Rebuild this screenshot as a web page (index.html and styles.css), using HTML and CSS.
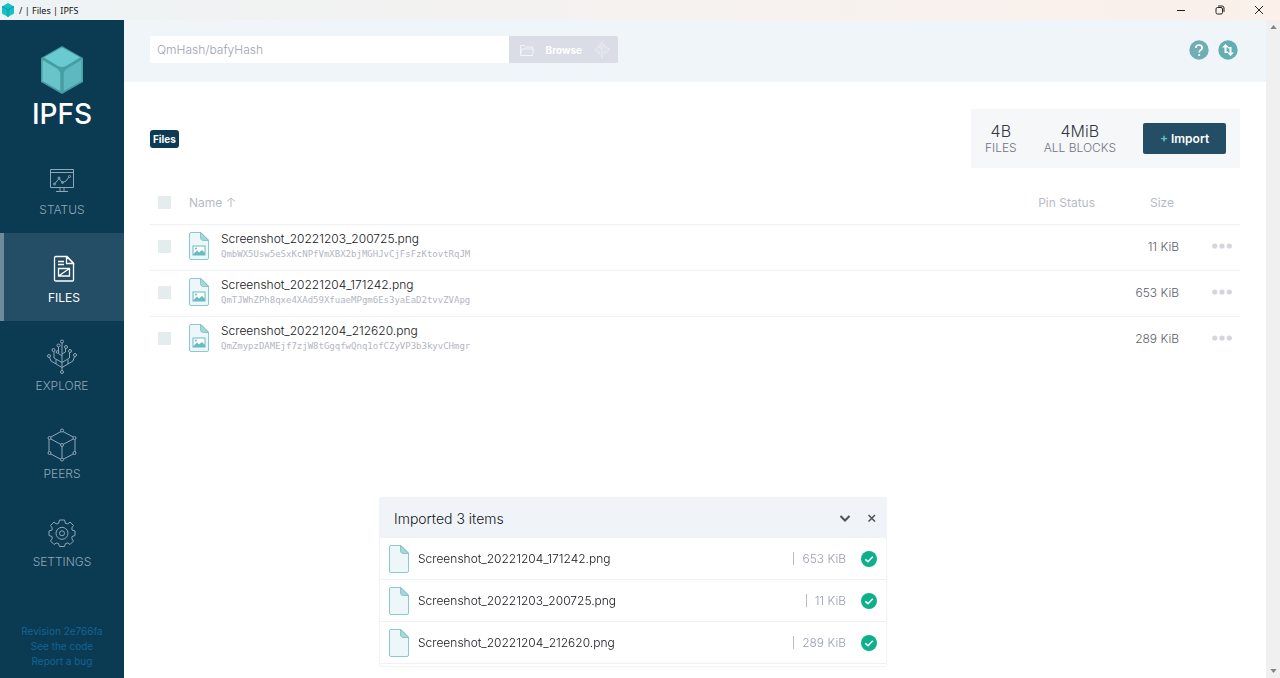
FILE: index.html
```html
<!DOCTYPE html>
<html lang="en">
<head>
<meta charset="utf-8">
<title>/ | Files | IPFS</title>
<link rel="stylesheet" href="styles.css">
</head>
<body>
<svg class="defs" aria-hidden="true">
  <symbol id="cube" viewBox="0 0 42 48">
    <path d="M21 0 42 12V36L21 48 0 36V12Z" fill="#469ea2"/>
    <path d="M3 11.500 20 2Q21 1.500 22 2L39 11.500 25 20Q21 22 17 20Z" fill="#6acad1"/>
    <path d="M1.500 14 16 22.500Q19.500 25 19.500 28V45L1.500 35Z" fill="#69c4ca"/>
    <path d="M40.500 14 26 22.500Q22.500 25 22.500 28V45L40.500 35Z" fill="#5bb9bf"/>
    <path d="M15 21Q21 25 27 21L22.500 26V46H19.500V26Z" fill="#469ea2"/>
  </symbol>
  <symbol id="tree" viewBox="0 0 30 36">
    <g fill="none" stroke="currentColor">
      <path d="M15 4V31.500M15 28.500 4 22 2.500 18.500M15 28.500 26 22 27.500 17.500M15 23.500 7 19V12.500M15 23.500 22.500 19V13.500M15 17 11.500 14.500V8M15 15 18.500 13V9.500M9 25V20.500M21 25V20.500"/>
      <circle cx="15" cy="2.500" r="1.500"/><circle cx="15" cy="33" r="1.500"/><circle cx="2" cy="17" r="1.500"/><circle cx="28" cy="16" r="1.500"/><circle cx="6.500" cy="11" r="1.500"/><circle cx="23" cy="12" r="1.500"/><circle cx="11.500" cy="6.500" r="1.500"/><circle cx="19" cy="8" r="1.500"/><circle cx="10.500" cy="13" r="1.300"/>
    </g>
  </symbol>
  <symbol id="doc" viewBox="0 0 20 28">
    <path d="M2 .5H12L19.500 8V26Q19.500 27.500 18 27.500H2Q.5 27.500 .5 26V2Q.5 .5 2 .5Z" fill="#edf7fa" stroke="#8bc9cf"/>
    <path d="M11.500 .5 19.500 8.500H14Q11.500 8 11.500 6Z" fill="#a5d8db" stroke="#79bdc3" stroke-width=".8"/>
  </symbol>
  <symbol id="picdoc" viewBox="0 0 20 28">
    <use href="#doc" width="20" height="28"/>
    <rect x="4" y="14" width="12" height="9" fill="#fff" stroke="#69bac1"/>
    <path d="M4 22.500 8 18.500 10 20.500 13 18 16 21V23H4Z" fill="#69bac1"/><circle cx="7" cy="16.500" r="1" fill="#69bac1"/>
  </symbol>
  <symbol id="dots" viewBox="0 0 20 6"><g fill="#d4d6dd"><circle cx="2.700" cy="3" r="2.600"/><circle cx="10" cy="3" r="2.600"/><circle cx="17.300" cy="3" r="2.600"/></g></symbol>
  <symbol id="check" viewBox="0 0 16 16"><circle cx="8" cy="8" r="8" fill="#0eb08c"/><path d="M4.300 8.300 7 10.700 11.800 5.700" fill="none" stroke="#fff" stroke-width="1.600"/></symbol>
</svg>

<header class="titlebar">
  <svg class="titlebar-logo" viewBox="0 0 12 14"><path d="M6 0 12 3.500V10.500L6 14 0 10.500V3.500Z" fill="#14c2c5"/><path d="M0 3.500 6 7 12 3.500M6 7V14" fill="none" stroke="#1297a3"/></svg>
  <span class="titlebar-text">/ | Files | IPFS</span>
  <div class="window-controls">
    <button aria-label="Minimize"><svg viewBox="0 0 10 10"><path d="M1 5.500H9"/></svg></button>
    <button aria-label="Restore"><svg viewBox="0 0 10 10"><rect x="1" y="2.500" width="6.500" height="6.500" rx="1.500"/><path d="M3 1H7Q9 1 9 3V7"/></svg></button>
    <button aria-label="Close"><svg viewBox="0 0 10 10"><path d="M1 1 9 9M9 1 1 9"/></svg></button>
  </div>
</header>

<div class="app">
  <aside class="sidebar">
    <a class="brand" href="#"><svg class="brand-cube"><use href="#cube"/></svg><span>IPFS</span></a>
    <nav class="nav">
      <a class="nav-item" href="#status">
        <svg viewBox="0 0 36 36" fill="none" stroke="currentColor"><path d="M6.500 6.500H29.500V24.500H6.500ZM6.500 9.500H29.500M16 24.500V28M20 24.500V28M12 28.500H24M11 20.500 15 15.500 18.500 19.500 22 18 25 14"/><circle cx="10.500" cy="21" r="1"/><circle cx="15" cy="15" r="1"/><circle cx="18.500" cy="19.500" r="1"/><circle cx="25.500" cy="13.500" r="1"/></svg>
        <span>STATUS</span></a>
      <a class="nav-item active" href="#files">
        <svg viewBox="0 0 36 36" fill="none" stroke="currentColor" stroke-width="1.300"><path d="M10 5.500H21L27.500 12V29Q27.500 30 26.500 30H10Q8.500 30 8.500 29V7Q8.500 5.500 10 5.500ZM20.500 5.500V12.500H27.500L20.500 5.500M12 10.500H18M12 13.500H18M12.500 17.500H23.500V25H12.500ZM12.500 25 23.500 17.500"/></svg>
        <span>FILES</span></a>
      <a class="nav-item" href="#explore"><svg><use href="#tree"/></svg><span>EXPLORE</span></a>
      <a class="nav-item" href="#peers">
        <svg viewBox="0 0 36 36" fill="none" stroke="currentColor"><path d="M18 4 31 11V26L18 33 5 26V11ZM5 11 18 18 31 11M18 18V33"/><g class="peer-nodes"><circle cx="18" cy="3.500" r="1.500"/><circle cx="5.500" cy="11" r="1.500"/><circle cx="30.500" cy="11" r="1.500"/><circle cx="5.500" cy="26" r="1.500"/><circle cx="30.500" cy="26" r="1.500"/><circle cx="18" cy="32.500" r="1.500"/><circle cx="18" cy="18" r="1.500"/></g></svg>
        <span>PEERS</span></a>
      <a class="nav-item" href="#settings">
        <svg viewBox="0 0 36 36" fill="none" stroke="currentColor" stroke-linejoin="round"><path d="M15.500 5H20.500L21.500 8.500Q24 10 26 7L29.500 10.500Q27 13 28 15L31 16V20.500L28 21.500Q27 24 29.500 26L26 29.500Q24 27 21.500 28.500L20.500 31.500H15.500L14.500 28.500Q12 27 10 29.500L6.500 26Q9 24 8 21.500L5 20.500V16L8 15Q9 13 6.500 10.500L10 7Q12 10 14.500 8.500Z"/><circle cx="18" cy="18.300" r="6"/><circle cx="18" cy="18.300" r="2.500"/></svg>
        <span>SETTINGS</span></a>
    </nav>
    <footer class="revision"><a href="#rev">Revision 2e766fa</a><a href="#code">See the code</a><a href="#bug">Report a bug</a></footer>
  </aside>

  <main class="main">
    <div class="topbar">
      <form class="search">
        <input type="text" placeholder="QmHash/bafyHash" aria-label="QmHash/bafyHash">
        <button type="button">
          <svg class="folder" viewBox="0 0 14 12" fill="none" stroke="currentColor"><path d="M.5 10.500V1.500H4.500L5.500 3H12.500V5M.5 11.500 2 5H13.500L12.500 11.500Z"/></svg>
          <span>Browse</span>
          <svg class="inspect"><use href="#tree"/></svg>
        </button>
      </form>
      <div class="top-actions">
        <button aria-label="Help"><svg viewBox="0 0 20 20"><circle cx="10" cy="10" r="9.700" fill="#70aeb4"/><path d="M6.800 8Q6.800 5 10 5T13.200 8C13.200 10 10.200 9.800 10.200 12.500" fill="none" stroke="#fff" stroke-width="1.700"/><circle cx="10.200" cy="15" r="1.100" fill="#fff"/></svg></button>
        <button aria-label="Transfers"><svg viewBox="0 0 20 20"><circle cx="10" cy="10" r="9.700" fill="#62afb1"/><path d="M7.500 4 11 7.500H8.500V11.500H10V13H6.500V7.500H4ZM12.500 16 9 12.500H11.500V8.500H10V7H13.500V12.500H16Z" fill="#fff"/></svg></button>
      </div>
    </div>

    <div class="content">
      <div class="files-head">
        <a class="crumb" href="#files">Files</a>
        <div class="stats">
          <div class="stat"><strong>4B</strong><span>FILES</span></div>
          <div class="stat"><strong>4MiB</strong><span>ALL BLOCKS</span></div>
          <button class="import"><span class="plus">+</span> Import</button>
        </div>
      </div>

      <table class="files">
        <thead>
          <tr><th class="col-check"><input type="checkbox" aria-label="Select all"></th><th class="col-name">Name <svg class="sort" viewBox="0 0 10 10"><path d="M5 10V1M1 4.500 5 1 9 4.500"/></svg></th><th class="col-pin">Pin Status</th><th class="col-size">Size</th><th class="col-more"></th></tr>
        </thead>
        <tbody>
          <tr><td><input type="checkbox" aria-label="Select Screenshot_20221203_200725.png"></td>
            <td><div class="file"><svg><use href="#picdoc"/></svg><div><div class="file-name">Screenshot_20221203_200725.png</div><div class="hash">QmbWX5Usw5eSxKcNPfVmXBX2bjMGHJvCjFsFzKtovtRqJM</div></div></div></td>
            <td></td><td class="size">11 KiB</td><td class="more"><button aria-label="More"><svg><use href="#dots"/></svg></button></td></tr>
          <tr><td><input type="checkbox" aria-label="Select Screenshot_20221204_171242.png"></td>
            <td><div class="file"><svg><use href="#picdoc"/></svg><div><div class="file-name">Screenshot_20221204_171242.png</div><div class="hash">QmTJWhZPh8qxe4XAd59XfuaeMPgm6Es3yaEaD2tvvZVApg</div></div></div></td>
            <td></td><td class="size">653 KiB</td><td class="more"><button aria-label="More"><svg><use href="#dots"/></svg></button></td></tr>
          <tr><td><input type="checkbox" aria-label="Select Screenshot_20221204_212620.png"></td>
            <td><div class="file"><svg><use href="#picdoc"/></svg><div><div class="file-name">Screenshot_20221204_212620.png</div><div class="hash">QmZmypzDAMEjf7zjW8tGgqfwQnq1ofCZyVP3b3kyvCHmgr</div></div></div></td>
            <td></td><td class="size">289 KiB</td><td class="more"><button aria-label="More"><svg><use href="#dots"/></svg></button></td></tr>
        </tbody>
      </table>
    </div>
  </main>

  <div class="scrollbar" aria-hidden="true"><svg viewBox="0 0 8 5"><path d="M0 5 4 0 8 5Z"/></svg><svg viewBox="0 0 8 5"><path d="M0 0H8L4 5Z"/></svg></div>
</div>

<section class="imports">
  <div class="imports-head">
    <span>Imported 3 items</span>
    <button aria-label="Collapse"><svg viewBox="0 0 12 12"><path d="M1.500 4 6 8.500 10.500 4"/></svg></button>
    <button aria-label="Close"><svg viewBox="0 0 12 12"><path d="M2.500 3 9 9.500M9 3 2.500 9.500"/></svg></button>
  </div>
  <ul>
    <li><svg class="doc"><use href="#doc"/></svg><span class="import-name">Screenshot_20221204_171242.png</span><span class="import-size">653 KiB</span><svg class="check"><use href="#check"/></svg></li>
    <li><svg class="doc"><use href="#doc"/></svg><span class="import-name">Screenshot_20221203_200725.png</span><span class="import-size">11 KiB</span><svg class="check"><use href="#check"/></svg></li>
    <li><svg class="doc"><use href="#doc"/></svg><span class="import-name">Screenshot_20221204_212620.png</span><span class="import-size">289 KiB</span><svg class="check"><use href="#check"/></svg></li>
  </ul>
</section>
</body>
</html>
```
FILE: styles.css
```css
* { box-sizing: border-box; }
body {
  margin: 0;
  min-height: 100vh;
  display: flex;
  flex-direction: column;
  font-family: Inter, "Liberation Sans", sans-serif;
  font-size: 13px;
  color: #34373f;
  background: #fff;
}
a { text-decoration: none; color: inherit; }
button { border: 0; padding: 0; background: none; font: inherit; color: inherit; }
svg { display: block; flex: none; }
.defs { position: absolute; width: 0; height: 0; }

.titlebar {
  height: 20px;
  display: flex;
  align-items: center;
  gap: 5px;
  padding-left: 2px;
  background: linear-gradient(90deg, #eef3f5, #f7f2ef 60%, #fbf0ea);
  font: 9px "Noto Sans", sans-serif;
  color: #111;
}
.titlebar-logo { width: 12px; height: 14px; }
.window-controls { display: flex; gap: 29px; margin-left: auto; padding-right: 16px; }
.window-controls svg { width: 10px; height: 10px; fill: none; stroke: #222; }

.app { flex: 1; display: flex; }

.sidebar {
  width: 124px;
  flex: none;
  display: flex;
  flex-direction: column;
  background: #0b3a53;
  text-align: center;
}
.brand {
  display: flex;
  flex-direction: column;
  align-items: center;
  gap: 3px;
  height: 125px;
  padding-top: 26px;
  color: #fff;
  font-size: 28px;
  line-height: 34px;
  font-weight: 500;
}
.brand-cube { width: 42px; height: 48px; }
.nav-item {
  display: flex;
  flex-direction: column;
  align-items: center;
  gap: 2px;
  height: 88px;
  padding-top: 18px;
  border-left: 4px solid transparent;
  border-right: 4px solid transparent;
  color: #8fa8b5;
  font-size: 12px;
  font-weight: 300;
  line-height: 18px;
}
.nav-item svg { width: 36px; height: 36px; }
.nav-item.active { background: #244e66; border-left-color: #6f8a99; border-right: 0; color: #fff; font-weight: 400; }
.peer-nodes { fill: #0b3a53; }
.revision {
  display: flex;
  flex-direction: column;
  margin-top: auto;
  padding-bottom: 9px;
  font-size: 10px;
  line-height: 15px;
  color: #116593;
}

.main { flex: 1; min-width: 0; }
.topbar {
  display: flex;
  align-items: center;
  justify-content: space-between;
  height: 62px;
  padding: 0 28px 3px 26px;
  background: #f0f5fa;
}
.search { display: flex; width: 43%; height: 27px; }
.search input {
  flex: 1;
  min-width: 0;
  border: 0;
  padding: 0 7px;
  border-radius: 2px 0 0 2px;
  font: 300 12px Inter, sans-serif;
  background: #fff;
}
.search input::placeholder { color: #9da2b1; opacity: 1; }
.search button {
  display: flex;
  align-items: center;
  justify-content: space-between;
  width: 109px;
  padding: 0 8px 0 11px;
  border-radius: 0 2px 2px 0;
  background: #dadce6;
  color: #fff;
  font-size: 10px;
  font-weight: 700;
}
.folder, .inspect { opacity: .7; }
.folder { width: 14px; height: 12px; }
.inspect { width: 16px; height: 18px; }
.top-actions { display: flex; gap: 9px; }
.top-actions svg { width: 20px; height: 20px; }

.content { padding: 27px 26px; }
.files-head { display: flex; justify-content: space-between; align-items: center; }
.crumb {
  padding: 0 3px;
  border-radius: 3px;
  background: #0b3a53;
  color: #fff;
  font-size: 10px;
  font-weight: 700;
  line-height: 18px;
}
.stats {
  display: flex;
  align-items: center;
  gap: 27px;
  height: 59px;
  padding: 0 14px 0 14px;
  background: #f6f7f9;
}
.stat { display: flex; flex-direction: column; align-items: center; }
.stat strong { font-size: 16px; font-weight: 300; line-height: 18px; }
.stat span { font-size: 12px; font-weight: 300; line-height: 15px; color: #6f7480; }
.import {
  width: 83px;
  height: 31px;
  border-radius: 2px;
  background: #244e66;
  color: #fff;
  font-size: 12px;
  font-weight: 600;
}
.plus { color: #69c4cd; }

.files { width: 100%; margin-top: 12px; border-collapse: collapse; table-layout: fixed; }
.files th { height: 44px; padding: 2px 0 0; font-size: 12px; font-weight: 400; text-align: left; color: #b7bbc8; }
.files td { height: 46px; padding: 0 0 2px; }
.files tbody tr { border-top: 1px solid #f0f1f4; }
.files input {
  appearance: none;
  display: block;
  width: 13px;
  height: 13px;
  margin: 0 0 0 8px;
  background: #e4ecee;
}
.files .col-check { width: 39px; }
.files .col-pin { width: 110px; text-align: right; padding-right: 5px; }
.files .col-size { width: 79px; text-align: right; padding-right: 5px; }
.files .col-more { width: 61px; }
.sort { display: inline; width: 10px; height: 10px; fill: none; stroke: #b7bbc8; }
.file { display: flex; align-items: center; gap: 12px; }
.file > svg { width: 20px; height: 28px; }
.file-name { font-size: 12px; font-weight: 300; line-height: 16px; color: #14161c; }
.hash { font: 9px/15px "DejaVu Sans Mono", monospace; color: #b3b6c2; }
.files .size { font-size: 12px; font-weight: 300; text-align: right; color: #5b5f69; }
.more button { display: block; margin-left: auto; margin-right: 8px; }
.more svg { width: 20px; height: 6px; }

.scrollbar {
  width: 14px;
  display: flex;
  flex-direction: column;
  align-items: center;
  justify-content: space-between;
  padding: 5px 0;
  background: #f0f0f0;
}
.scrollbar svg { width: 7px; height: 4px; fill: #858585; }

.imports {
  position: fixed;
  left: 0;
  right: 14px;
  bottom: 12px;
  width: 506px;
  max-width: 90%;
  margin: 0 auto;
  padding-bottom: 2px;
  background: #fff;
  box-shadow: 0 0 2px rgba(0, 0, 0, .14);
}
.imports-head {
  display: flex;
  align-items: center;
  gap: 15px;
  height: 40px;
  padding: 0 8px 0 14px;
  background: #f0f4f8;
}
.imports-head span { flex: 1; font-size: 14px; font-weight: 300; color: #14161c; }
.imports-head svg { width: 12px; height: 12px; fill: none; stroke: #4c5057; stroke-width: 2; }
.imports-head button:last-child svg { stroke-width: 1.5; }
.imports ul { margin: 0; padding: 0; list-style: none; }
.imports li {
  display: flex;
  align-items: center;
  height: 42px;
  padding: 0 9px;
  border-bottom: 1px solid #f0f1f4;
}
.doc { width: 20px; height: 28px; }
.import-name { flex: 1; padding-left: 9px; font-size: 12px; font-weight: 300; color: #14161c; }
.import-size { padding-left: 8px; margin-right: 15px; border-left: 1px solid #b7bbc8; font-size: 12px; font-weight: 300; line-height: 13px; color: #9a9eb2; }
.check { width: 16px; height: 16px; }
```
